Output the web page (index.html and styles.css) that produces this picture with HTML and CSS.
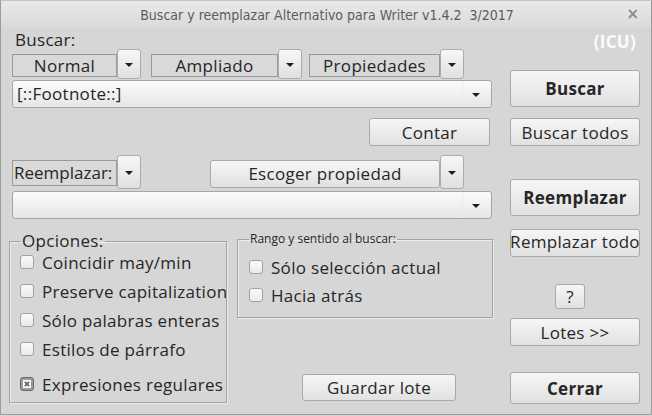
FILE: index.html
```html
<!DOCTYPE html>
<html lang="es">
<head>
    <meta charset="UTF-8">
    <title>Buscar y reemplazar</title>
    <link rel="stylesheet" href="styles.css">
</head>
<body>
<div class="ventana">
    <div class="titulo">
        <span class="titulo-texto">Buscar y reemplazar Alternativo para Writer v1.4.2&nbsp;&nbsp;3/2017</span>
        <span class="cerrar-x">&times;</span>
    </div>

    <div class="contenido">
        <div class="principal">
            <div class="etiqueta">Buscar:</div>

            <div class="selectores">
                <span class="plano ancho-normal">Normal</span><span class="flecha"></span>
                <span class="plano ancho-ampliado sep1">Ampliado</span><span class="flecha"></span>
                <span class="plano ancho-prop sep2">Propiedades</span><span class="flecha"></span>
            </div>

            <div class="combo">
                <span class="combo-texto">[::Footnote::]</span>
                <span class="combo-btn"></span>
            </div>

            <div class="fila-contar">
                <button class="boton contar">Contar</button>
            </div>

            <div class="fila-reemplazar">
                <span class="plano plano-izq">Reemplazar:</span><span class="flecha alta"></span>
                <button class="boton escoger">Escoger propiedad</button><span class="flecha alta"></span>
            </div>

            <div class="combo combo2">
                <span class="combo-texto"></span>
                <span class="combo-btn"></span>
            </div>

            <div class="fila-opciones">
                <fieldset class="grupo opciones">
                    <legend>Opciones:</legend>
                    <div class="opcion"><span class="casilla"></span><span class="opcion-texto">Coincidir may/min</span></div>
                    <div class="opcion"><span class="casilla"></span><span class="opcion-texto">Preserve capitalization</span></div>
                    <div class="opcion"><span class="casilla"></span><span class="opcion-texto">Sólo palabras enteras</span></div>
                    <div class="opcion"><span class="casilla"></span><span class="opcion-texto">Estilos de párrafo</span></div>
                    <div class="opcion ultima"><span class="casilla marcada"><span class="marca"></span></span><span class="opcion-texto">Expresiones regulares</span></div>
                </fieldset>

                <div class="columna-rango">
                    <fieldset class="grupo rango">
                        <legend>Rango y sentido al buscar:</legend>
                        <div class="opcion"><span class="casilla"></span><span class="opcion-texto">Sólo selección actual</span></div>
                        <div class="opcion"><span class="casilla"></span><span class="opcion-texto">Hacia atrás</span></div>
                    </fieldset>
                    <button class="boton guardar">Guardar lote</button>
                </div>
            </div>
        </div>

        <div class="lateral">
            <div class="icu">(ICU)</div>
            <button class="boton grande negrita b-buscar">Buscar</button>
            <button class="boton b-todos">Buscar todos</button>
            <button class="boton grande negrita b-reemplazar">Reemplazar</button>
            <button class="boton b-remplazar-todo"><span>Remplazar todo</span></button>
            <button class="boton b-ayuda">?</button>
            <button class="boton b-lotes">Lotes &gt;&gt;</button>
            <button class="boton negrita b-cerrar">Cerrar</button>
        </div>
    </div>
</div>
</body>
</html>
```

FILE: styles.css
```css
/* Dialogo de buscar y reemplazar */
* {
    box-sizing: border-box;
}

body {
    margin: 0;
    background: #d6d6d6;
    font-family: "Open Sans", Lato, sans-serif;
    font-size: 17px;
    letter-spacing: 0.3px;
    color: #262626;
}

.ventana {
    width: 652px;
    height: 415px;
    border: 1px solid #9c9c9c;
    border-top-color: #c4c4c4;
    background: #d6d6d6;
    overflow: hidden;
}

.titulo {
    height: 27px;
    display: flex;
    align-items: center;
    justify-content: center;
    position: relative;
    background: linear-gradient(#e9e9e9, #dadada);
    letter-spacing: 0;
}

.titulo-texto {
    font-family: "DejaVu Sans", sans-serif;
    font-stretch: condensed;
    font-size: 14px;
    color: #5c5c5c;
    margin-left: 2px;
}

.cerrar-x {
    position: absolute;
    right: 12px;
    top: 4px;
    font-family: "DejaVu Sans", sans-serif;
    font-size: 15px;
    font-weight: bold;
    color: #8a8a8a;
}

.contenido {
    display: flex;
}

/* columna izquierda */
.principal {
    width: 484px;
    margin-left: 8px;
    display: flex;
    flex-direction: column;
}

.etiqueta {
    margin-top: 3px;
    margin-left: 6px;
    height: 18px;
    line-height: 18px;
}

.selectores {
    display: flex;
    align-items: center;
    height: 30px;
    margin-left: 3px;
}

.plano {
    height: 23px;
    line-height: 21px;
    border: 1px solid #9a9a9a;
    background: #d9d9d9;
    text-align: center;
    margin-top: 2px;
}

.ancho-normal { width: 105px; }
.ancho-ampliado { width: 127px; }
.ancho-prop { width: 131px; }
.sep1 { margin-left: 10px; }
.sep2 { margin-left: 7px; }

.flecha {
    width: 24px;
    height: 30px;
    border: 1px solid #ababab;
    border-radius: 3px;
    background: linear-gradient(#f7f7f7, #e0e0e0);
    position: relative;
}

.flecha::after,
.combo-btn::after {
    content: "";
    position: absolute;
    left: 50%;
    top: 50%;
    margin-left: -4px;
    margin-top: -1px;
    border-left: 4px solid transparent;
    border-right: 4px solid transparent;
    border-top: 4px solid #1e1e1e;
}

.flecha.alta {
    height: 34px;
}

.combo {
    margin-top: 1px;
    margin-left: 3px;
    width: 480px;
    height: 28px;
    border: 1px solid #a6a6a6;
    border-radius: 3px;
    background: linear-gradient(#fbfbfb, #e6e6e6);
    display: flex;
}

.combo-texto {
    flex: 1;
    padding-left: 4px;
    line-height: 26px;
}

.combo-btn {
    width: 29px;
    position: relative;
    border-left: 1px solid #ececec;
}

.combo-btn::after {
    margin-left: -5px;
}

.fila-contar {
    margin-top: 10px;
    height: 28px;
    display: flex;
}

.boton {
    font-family: inherit;
    font-size: 17px;
    letter-spacing: 0.3px;
    color: #262626;
    border: 1px solid #a9a9a9;
    border-radius: 3px;
    background: linear-gradient(#f6f6f6, #e1e1e1);
    padding: 0;
    height: 28px;
    white-space: nowrap;
    overflow: hidden;
}

.contar {
    margin-left: 360px;
    width: 121px;
}

.fila-reemplazar {
    margin-top: 9px;
    height: 34px;
    display: flex;
    align-items: center;
    margin-left: 3px;
}

.plano-izq {
    width: 105px;
    height: 26px;
    line-height: 24px;
    text-align: left;
    padding-left: 1px;
    margin-top: 2px;
    white-space: nowrap;
    overflow: hidden;
    letter-spacing: 0;
}

.escoger {
    width: 230px;
    margin-left: 69px;
    margin-top: 3px;
}

.combo2 {
    margin-top: 2px;
}

/* grupos de opciones */
.fila-opciones {
    margin-top: 12px;
    display: flex;
    align-items: flex-start;
}

.grupo {
    margin: 0;
    border: 1px solid #a3a3a3;
    box-shadow: 1px 1px 0 #ececec, inset 1px 1px 0 #ececec;
    padding: 0;
    min-width: 0;
}

.opciones {
    width: 220px;
    height: 172px;
    padding: 0 0 0 10px;
}

.opciones legend {
    font-size: 17px;
    line-height: 20px;
    padding: 0 1px;
    margin-left: 1px;
}

.opciones .opcion {
    margin-top: 7px;
}

.opciones .opcion:first-of-type {
    margin-top: 0;
}

.opciones .opcion.ultima {
    margin-top: 13px;
}

.opcion {
    display: flex;
    align-items: center;
    height: 22px;
    white-space: nowrap;
    overflow: hidden;
}

.casilla {
    flex: none;
    width: 14px;
    height: 14px;
    border: 1px solid #a2a2a2;
    border-radius: 3px;
    background: linear-gradient(#fafafa, #e9e9e9);
    display: flex;
    align-items: center;
    justify-content: center;
}

.casilla.marcada {
    border-color: #6a6a6a;
    background: #9a9a9a;
}

.marca {
    width: 8px;
    height: 8px;
    background: #fafafa;
    position: relative;
}

.marca::before,
.marca::after {
    content: "";
    position: absolute;
    left: 3px;
    top: 1px;
    width: 2px;
    height: 6px;
    background: #6a6a6a;
    transform: rotate(45deg);
}

.marca::after {
    transform: rotate(-45deg);
}

.opcion-texto {
    margin-left: 8px;
}

.columna-rango {
    margin-left: 10px;
    display: flex;
    flex-direction: column;
}

.rango {
    width: 256px;
    height: 87px;
    padding: 9px 0 0 11px;
}

.rango legend {
    font-size: 12px;
    line-height: 16px;
    letter-spacing: 0;
    padding: 0 1px;
    margin-left: 0;
}

.rango .opcion + .opcion {
    margin-top: 6px;
}

.guardar {
    margin-top: 56px;
    margin-left: 65px;
    width: 154px;
    height: 27px;
}

/* columna derecha de botones */
.lateral {
    margin-left: 17px;
    width: 130px;
    display: flex;
    flex-direction: column;
}

.icu {
    margin-top: 4px;
    height: 20px;
    line-height: 20px;
    text-align: right;
    padding-right: 4px;
    color: #fbfbfb;
    font-weight: bold;
    font-size: 17px;
}

.lateral .boton {
    width: 130px;
}

.grande {
    height: 37px;
}

.negrita {
    font-weight: bold;
}

.b-buscar { margin-top: 18px; }
.b-todos { margin-top: 11px; }
.b-reemplazar { margin-top: 33px; }
.b-remplazar-todo {
    margin-top: 13px;
    display: flex;
    justify-content: center;
}
.lateral .b-ayuda {
    margin-top: 27px;
    margin-left: 45px;
    width: 30px;
    height: 25px;
}
.b-lotes { margin-top: 9px; }
.b-cerrar {
    margin-top: 26px;
    height: 32px;
}
```
